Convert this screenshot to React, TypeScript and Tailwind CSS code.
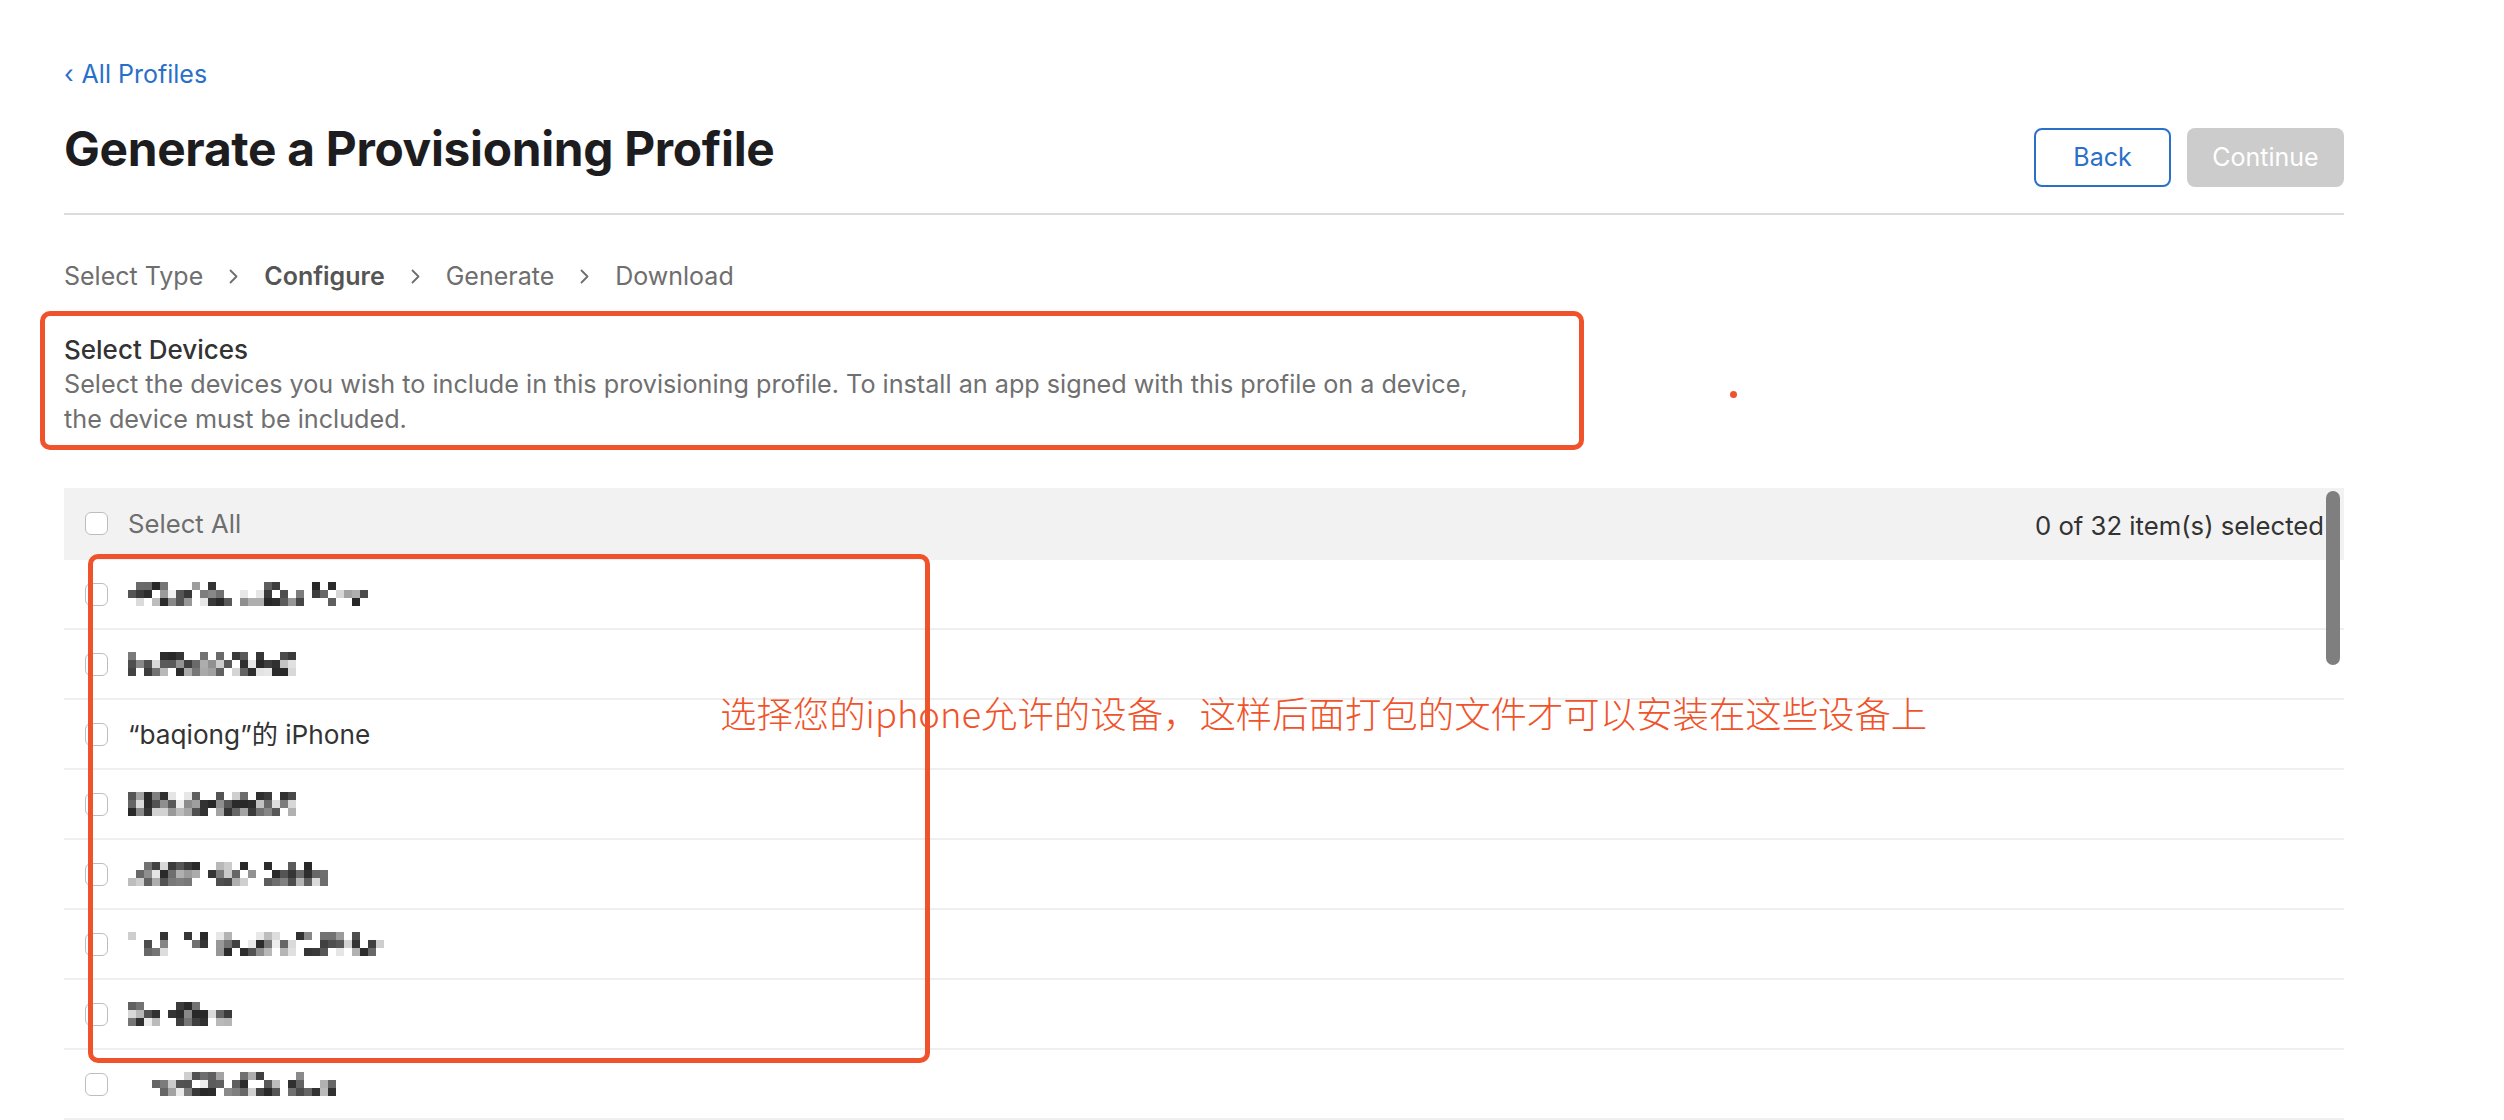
import React from "react";

// pixelated (redacted) device names
function Mosaic({ seed, width, density = 0.85 }: { seed: number; width: number; density?: number }) {
  const cell = 8;
  const cols = Math.round(width / cell);
  let s = seed;
  const rand = () => {
    s = (s * 9301 + 49297) % 233280;
    return s / 233280;
  };
  const rects: React.ReactNode[] = [];
  for (let c = 0; c < cols; c++) {
    const gap = rand() < 0.08;
    for (let r = 0; r < 3; r++) {
      const d = r === 0 ? density * 0.55 : density;
      if (gap || rand() > d) continue;
      const shade = Math.floor(40 + Math.pow(rand(), 1.6) * 200);
      rects.push(
        <rect
          key={`${c}-${r}`}
          x={c * cell}
          y={r * cell}
          width={cell}
          height={cell}
          fill={`rgb(${shade},${shade},${shade})`}
        />
      );
    }
  }
  return (
    <svg width={cols * cell} height={cell * 3} className="block">
      {rects}
    </svg>
  );
}

function Checkbox() {
  return <span className="block h-[23px] w-[23px] shrink-0 rounded-[6px] border border-[#bdbdbd] bg-white" />;
}

function Chevron() {
  return (
    <svg width="9" height="15" viewBox="0 0 9 15" fill="none" className="shrink-0">
      <path d="M1.5 1.5l6 6-6 6" stroke="#6e6e6e" strokeWidth="1.8" strokeLinecap="round" strokeLinejoin="round" />
    </svg>
  );
}

const rows = [
  { seed: 17, width: 236, density: 0.7 },
  { seed: 83, width: 171, density: 0.85 },
  { text: "“baqiong”的 iPhone" },
  { seed: 211, width: 171, density: 0.95 },
  { seed: 409, width: 196, density: 0.9 },
  { seed: 57, width: 252, density: 0.7 },
  { seed: 333, width: 115, density: 0.9 },
  { seed: 129, width: 180, density: 0.85, offset: true },
];

export default function App() {
  return (
    <div className="relative h-[1120px] w-[2504px] overflow-hidden bg-white font-['Inter','Noto_Sans_CJK_SC',sans-serif]">
      <div className="ml-16 w-[2280px] pt-[58px]">
        <a className="flex items-center gap-[8px] text-[25px] leading-[32px] text-[#2a70c9]">
          <span className="leading-[32px]">‹</span>
          All Profiles
        </a>

        <div className="mt-[33px] flex items-start justify-between">
          <h1 className="text-[47.8px] font-bold leading-[52px] tracking-[-0.3px] text-[#1d1d1f]">
            Generate a Provisioning Profile
          </h1>
          <div className="mt-[5px] flex gap-4">
            <button className="h-[59px] w-[137px] rounded-lg border-2 border-[#2a70c9] bg-white text-[25px] text-[#2a70c9]">
              Back
            </button>
            <button className="h-[59px] w-[157px] rounded-lg bg-[#cccccc] text-[25px] text-white">Continue</button>
          </div>
        </div>

        <div className="mt-[26px] h-[2px] bg-[#dcdcdc]" />

        <nav className="mt-[45px] flex items-center gap-[26px] text-[25px] leading-[32px] text-[#6e6e6e]">
          <span>Select Type</span>
          <Chevron />
          <span className="font-semibold text-[#555555]">Configure</span>
          <Chevron />
          <span>Generate</span>
          <Chevron />
          <span>Download</span>
        </nav>

        <section className="mt-[42px]">
          <h2 className="text-[26px] font-medium leading-[32px] text-[#333333]">Select Devices</h2>
          <p className="mt-[1px] text-[25.2px] leading-[35px] text-[#707070]">
            Select the devices you wish to include in this provisioning profile. To install an app signed with this
            profile on a device,
            <br />
            the device must be included.
          </p>
        </section>

        <div className="relative mt-[51px]">
          <div className="flex h-[72px] items-center justify-between bg-[#f2f2f2] pl-[21px] pr-[20px] text-[25.7px]">
            <div className="flex items-center gap-[20px]">
              <Checkbox />
              <span className="text-[#6e6e6e]">Select All</span>
            </div>
            <span className="mt-[5px] text-[#333333]">0 of 32 item(s) selected</span>
          </div>
          {rows.map((r, i) => (
            <div key={i} className="flex h-[70px] items-center gap-[20px] border-b-2 border-[#efefef] pl-[21px]">
              <Checkbox />
              {r.text ? (
                <span className="mt-[2px] text-[26.2px] text-[#333333]">{r.text}</span>
              ) : (
                <div className={r.offset ? "ml-[24px]" : ""}>
                  <Mosaic seed={r.seed!} width={r.width!} density={r.density} />
                </div>
              )}
            </div>
          ))}
          <div className="absolute right-[4px] top-[3px] h-[174px] w-[14px] rounded-full bg-[#7f7f7f]" />
        </div>
      </div>

      {/* annotations */}
      <div className="absolute left-[40px] top-[311px] h-[139px] w-[1544px] rounded-[10px] border-[5px] border-[#f0532b]" />
      <div className="absolute left-[1730px] top-[391px] h-[7px] w-[7px] rounded-full bg-[#f0532b]" />
      <div className="absolute left-[88px] top-[554px] h-[509px] w-[842px] rounded-[10px] border-[5px] border-[#f0532b]" />
      <div className="absolute left-[720px] top-[692px] font-['Noto_Sans_CJK_SC',sans-serif] text-[36.4px] font-light leading-[40px] text-[#f0532b]">
        选择您的iphone允许的设备，这样后面打包的文件才可以安装在这些设备上
      </div>
    </div>
  );
}
